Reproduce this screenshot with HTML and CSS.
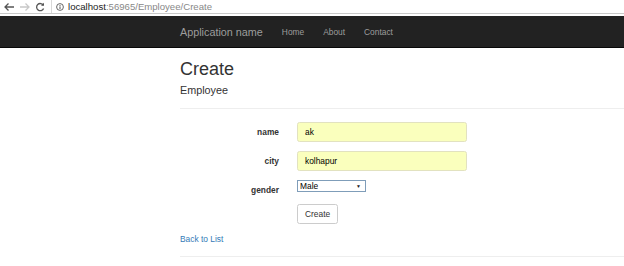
FILE: index.html
```html
<!DOCTYPE html>
<html lang="en">
<head>
    <meta charset="UTF-8">
    <title>Create - My ASP.NET Application</title>
    <link rel="stylesheet" href="styles.css">
</head>
<body>

    <div class="chrome">
        <svg class="chrome-btn" width="12" height="10" viewBox="0 0 12 10">
            <path d="M11 5H2M5.5 1.5L2 5l3.5 3.5" fill="none" stroke="#555" stroke-width="1.3"/>
        </svg>
        <svg class="chrome-btn" width="12" height="10" viewBox="0 0 12 10">
            <path d="M1 5h9M6.5 1.5L10 5 6.5 8.5" fill="none" stroke="#c8c8c8" stroke-width="1.3"/>
        </svg>
        <svg class="chrome-btn" width="10" height="10" viewBox="0 0 10 10">
            <path d="M8.3 3.2A3.6 3.6 0 1 0 8.6 6.4" fill="none" stroke="#555" stroke-width="1.3"/>
            <path d="M9 0.8v3H6z" fill="#555"/>
        </svg>
        <div class="omnibox">
            <svg width="8" height="8" viewBox="0 0 8 8">
                <circle cx="4" cy="4" r="3.4" fill="none" stroke="#555" stroke-width="0.9"/>
                <path d="M4 3.4v2.6M4 2v0.9" stroke="#555" stroke-width="1"/>
            </svg>
            <span class="host">localhost</span><span class="path">:56965/Employee/Create</span>
        </div>
    </div>

    <div class="navbar">
        <div class="container nav-inner">
            <a class="brand" href="#">Application name</a>
            <a class="nav-link" href="#">Home</a>
            <a class="nav-link" href="#">About</a>
            <a class="nav-link" href="#">Contact</a>
        </div>
    </div>

    <div class="container body-content">
        <h2>Create</h2>
        <h4>Employee</h4>
        <hr>

        <form class="form-horizontal">
            <div class="form-group">
                <label class="control-label" for="name">name</label>
                <input class="form-control autofill" type="text" id="name" value="ak">
            </div>
            <div class="form-group">
                <label class="control-label" for="city">city</label>
                <input class="form-control autofill" type="text" id="city" value="kolhapur">
            </div>
            <div class="form-group gender-row">
                <label class="control-label" for="gender">gender</label>
                <div class="select-box">
                    <span>Male</span>
                    <span class="caret">&#9660;</span>
                </div>
            </div>
            <div class="form-group">
                <span></span>
                <div><button class="btn" type="button">Create</button></div>
            </div>
        </form>

        <div class="back">
            <a href="#">Back to List</a>
        </div>
        <hr class="footer-rule">
    </div>

</body>
</html>
```

FILE: styles.css
```css
body {
    margin: 0;
    padding: 0;
    font-family: "Liberation Sans", Arial, sans-serif;
    font-size: 8.4px;
    color: #333;
    background-color: white;
}
a {
    text-decoration: none;
}
.chrome {
    height: 13px;
    border-bottom: 1px solid #c9c9c9;
    display: flex;
    align-items: center;
    padding-left: 3px;
}
.chrome-btn {
    margin-right: 4px;
}
.omnibox {
    margin-left: 2px;
    align-self: stretch;
    border-left: 1px solid #d8d8d8;
    display: flex;
    align-items: center;
    padding-left: 4px;
    flex: 1;
    font-size: 9.6px;
}
.omnibox svg {
    margin-right: 4px;
}
.host {
    color: #222;
}
.path {
    color: #888;
}
.navbar {
    margin-top: 2px;
    background-color: #222;
    height: 31px;
    border-bottom: 1px solid #080808;
}
.container {
    margin-left: 171px;
}
.nav-inner {
    display: flex;
    align-items: center;
    height: 31px;
}
.brand {
    color: #9d9d9d;
    font-size: 10.8px;
    padding: 0 9px;
}
.nav-link {
    color: #9d9d9d;
    padding: 0 9px;
    margin-left: 1px;
}
.body-content {
    margin-left: 180px;
}
h2 {
    font-size: 18px;
    font-weight: normal;
    margin: 11px 0 0 0;
    line-height: 20px;
    color: #333;
}
h4 {
    font-size: 10.8px;
    font-weight: normal;
    margin: 5px 0 0 0;
    line-height: 12px;
}
hr {
    border: 0;
    border-top: 1px solid #eee;
    margin: 12px 0 13px 0;
}
.form-group {
    display: grid;
    grid-template-columns: 99px 170px;
    column-gap: 18px;
    margin-bottom: 9px;
}
.control-label {
    text-align: right;
    font-weight: bold;
    color: #333;
    align-self: center;
}
.form-control {
    height: 20px;
    box-sizing: border-box;
    padding: 0 7px;
    font-family: inherit;
    font-size: 8.4px;
    color: #000;
    border: 1px solid #e2e2c0;
    border-radius: 2.5px;
    margin: 0;
}
.autofill {
    background-color: #faffbd;
}
.gender-row .control-label {
    align-self: start;
    padding-top: 5px;
}
.select-box {
    width: 69px;
    height: 12px;
    box-sizing: border-box;
    border: 1px solid #7f9db9;
    display: flex;
    align-items: center;
    justify-content: space-between;
    padding: 0 4px 0 2px;
    color: #000;
    font-size: 8.4px;
}
.caret {
    font-size: 5px;
    color: #222;
}
.btn {
    height: 20px;
    padding: 0 7px;
    font-family: inherit;
    font-size: 8.4px;
    color: #333;
    background-color: white;
    border: 1px solid #ccc;
    border-radius: 2.5px;
}
.back {
    margin-top: 1px;
    line-height: 12px;
}
.back a {
    color: #337ab7;
}
.footer-rule {
    margin-top: 11px;
}
```
